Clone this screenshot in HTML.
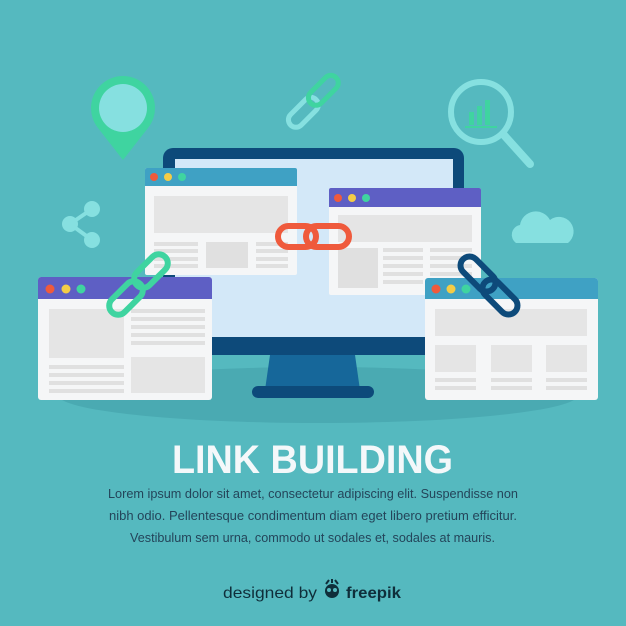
<!DOCTYPE html>
<html><head><meta charset="utf-8"><style>html,body{margin:0;padding:0;background:#55b9bf}svg{display:block}</style></head>
<body>
<svg width="626" height="626" viewBox="0 0 626 626" xmlns="http://www.w3.org/2000/svg" font-family="Liberation Sans, sans-serif">
<rect width="626" height="626" fill="#55b9bf"/>
<ellipse cx="318" cy="395" rx="260" ry="28" fill="#4aaab2"/>
<!-- pin -->
<path d="M123 160 L98 128 A32 32 0 1 1 148 128 Z" fill="#3fd4a0"/>
<circle cx="123" cy="108" r="24" fill="#86e0e0"/>
<!-- top chain -->
<g fill="none" stroke-width="5">
<rect x="285" y="105" width="36" height="15" rx="7.5" transform="rotate(-45 303 112)" stroke="#86e0e0"/>
<rect x="305" y="83" width="36" height="15" rx="7.5" transform="rotate(-45 323 90)" stroke="#3fd4a0"/>
</g>
<!-- magnifier -->
<circle cx="481" cy="112" r="30" fill="none" stroke="#86e0e0" stroke-width="6"/>
<line x1="503" y1="134" x2="530" y2="164" stroke="#86e0e0" stroke-width="8" stroke-linecap="round"/>
<rect x="469" y="112" width="5" height="13" fill="#3fd4a0"/><rect x="477" y="106" width="5" height="19" fill="#3fd4a0"/><rect x="485" y="100" width="5" height="25" fill="#3fd4a0"/>
<rect x="465" y="126" width="32" height="2" fill="#3fd4a0"/>
<!-- cloud -->
<path d="M516 243 A10 10 0 0 1 520 225 A16 16 0 0 1 550 220 A12 12 0 0 1 568 243 Z" fill="#86e0e0"/>
<!-- share -->
<g stroke="#86e0e0" stroke-width="4"><line x1="70" y1="224" x2="92" y2="209"/><line x1="70" y1="224" x2="92" y2="240"/></g>
<circle cx="70" cy="224" r="8" fill="#86e0e0"/><circle cx="92" cy="209" r="8" fill="#86e0e0"/><circle cx="92" cy="240" r="8" fill="#86e0e0"/>
<!-- monitor -->
<rect x="163" y="148" width="301" height="207" rx="10" fill="#0d4a7a"/>
<rect x="175" y="159" width="278" height="178" fill="#d3e8f8"/>
<path d="M270 355 L355 355 L360 390 L265 390 Z" fill="#16679a"/>
<rect x="252" y="386" width="122" height="12" rx="6" fill="#0d4a7a"/>
<!-- window1 -->
<rect x="145" y="168" width="152" height="107" rx="2" fill="#f5f6f7"/>
<path d="M147 168 H295 A2 2 0 0 1 297 170 V186 H145 V170 A2 2 0 0 1 147 168Z" fill="#3fa1c4"/>
<circle cx="154" cy="177" r="4" fill="#ef5a3c"/><circle cx="168" cy="177" r="4" fill="#f4cc46"/><circle cx="182" cy="177" r="4" fill="#3fd4a0"/>
<rect x="154" y="196" width="134" height="37" fill="#e5e5e5"/>
<rect x="206" y="242" width="42" height="26" fill="#e0e0e0"/>
<g fill="#e0e0e0"><rect x="154" y="242" width="44" height="4"/><rect x="154" y="249" width="44" height="4"/><rect x="154" y="257" width="44" height="4"/><rect x="154" y="264" width="44" height="4"/>
<rect x="256" y="242" width="32" height="4"/><rect x="256" y="249" width="32" height="4"/><rect x="256" y="257" width="32" height="4"/><rect x="256" y="264" width="32" height="4"/></g>
<!-- window2 -->
<rect x="329" y="188" width="152" height="107" rx="2" fill="#f5f6f7"/>
<path d="M331 188 H479 A2 2 0 0 1 481 190 V207 H329 V190 A2 2 0 0 1 331 188Z" fill="#5e5fc4"/>
<circle cx="338" cy="198" r="4" fill="#ef5a3c"/><circle cx="352" cy="198" r="4" fill="#f4cc46"/><circle cx="366" cy="198" r="4" fill="#3fd4a0"/>
<rect x="338" y="215" width="134" height="27" fill="#e5e5e5"/>
<rect x="338" y="248" width="40" height="40" fill="#e0e0e0"/>
<g fill="#e0e0e0"><rect x="383" y="248" width="40" height="4"/><rect x="383" y="256" width="40" height="4"/><rect x="383" y="264" width="40" height="4"/><rect x="383" y="272" width="40" height="4"/><rect x="383" y="280" width="40" height="4"/>
<rect x="430" y="248" width="42" height="4"/><rect x="430" y="256" width="42" height="4"/><rect x="430" y="264" width="42" height="4"/><rect x="430" y="272" width="42" height="4"/></g>
<!-- orange chain -->
<g fill="none" stroke="#ef5a3c" stroke-width="6">
<rect x="278" y="226" width="38" height="21" rx="10.5"/>
<rect x="306" y="226" width="43" height="21" rx="10.5"/>
</g>
<!-- window3 -->
<rect x="38" y="277" width="174" height="123" rx="3" fill="#f5f6f7"/>
<path d="M41 277 H209 A3 3 0 0 1 212 280 V299 H38 V280 A3 3 0 0 1 41 277Z" fill="#5e5fc4"/>
<circle cx="50" cy="289" r="4.5" fill="#ef5a3c"/><circle cx="66" cy="289" r="4.5" fill="#f4cc46"/><circle cx="81" cy="289" r="4.5" fill="#3fd4a0"/>
<rect x="49" y="309" width="75" height="49" fill="#e5e5e5"/>
<rect x="131" y="357" width="74" height="36" fill="#e5e5e5"/>
<g fill="#e0e0e0"><rect x="49" y="365" width="75" height="4"/><rect x="49" y="373" width="75" height="4"/><rect x="49" y="381" width="75" height="4"/><rect x="49" y="389" width="75" height="4"/>
<rect x="131" y="309" width="74" height="4"/><rect x="131" y="317" width="74" height="4"/><rect x="131" y="325" width="74" height="4"/><rect x="131" y="333" width="74" height="4"/><rect x="131" y="341" width="74" height="4"/></g>
<!-- green chain -->
<g fill="none" stroke="#3fd4a0" stroke-width="6">
<rect x="106" y="289" width="40" height="18" rx="9" transform="rotate(-45 126 298)"/>
<rect x="131" y="262" width="40" height="18" rx="9" transform="rotate(-45 151 271)"/>
</g>
<!-- window4 -->
<rect x="425" y="278" width="173" height="122" rx="3" fill="#f5f6f7"/>
<path d="M428 278 H595 A3 3 0 0 1 598 281 V299 H425 V281 A3 3 0 0 1 428 278Z" fill="#3fa1c4"/>
<circle cx="436" cy="289" r="4.5" fill="#ef5a3c"/><circle cx="451" cy="289" r="4.5" fill="#f4cc46"/><circle cx="466" cy="289" r="4.5" fill="#3fd4a0"/>
<rect x="435" y="309" width="152" height="27" fill="#e5e5e5"/>
<rect x="435" y="345" width="41" height="27" fill="#e5e5e5"/><rect x="491" y="345" width="41" height="27" fill="#e5e5e5"/><rect x="546" y="345" width="41" height="27" fill="#e5e5e5"/>
<g fill="#e0e0e0"><rect x="435" y="378" width="41" height="4"/><rect x="435" y="386" width="41" height="4"/><rect x="491" y="378" width="41" height="4"/><rect x="491" y="386" width="41" height="4"/><rect x="546" y="378" width="41" height="4"/><rect x="546" y="386" width="41" height="4"/></g>
<!-- dark chain -->
<g fill="none" stroke="#0d4a7a" stroke-width="6">
<rect x="457" y="265" width="42" height="18" rx="9" transform="rotate(45 478 274)"/>
<rect x="479" y="288" width="42" height="18" rx="9" transform="rotate(45 500 297)"/>
</g>
<!-- text -->
<text x="172" y="473" font-size="40" font-weight="bold" fill="#f4f8fa" textLength="281" lengthAdjust="spacingAndGlyphs">LINK BUILDING</text>
<g font-size="12.5" fill="#24455a">
<text x="108" y="498" textLength="410" lengthAdjust="spacingAndGlyphs">Lorem ipsum dolor sit amet, consectetur adipiscing elit. Suspendisse non</text>
<text x="109" y="520" textLength="408" lengthAdjust="spacingAndGlyphs">nibh odio. Pellentesque condimentum diam eget libero pretium efficitur.</text>
<text x="130" y="542" textLength="365" lengthAdjust="spacingAndGlyphs">Vestibulum sem urna, commodo ut sodales et, sodales at mauris.</text>
</g>
<text x="223" y="598" font-size="16" fill="#0f2e3a" textLength="94" lengthAdjust="spacingAndGlyphs">designed by</text>
<circle cx="332" cy="591" r="7" fill="#0f2e3a"/><circle cx="329" cy="590" r="2" fill="#55b9bf"/><circle cx="335" cy="590" r="2" fill="#55b9bf"/>
<path d="M326 584 L329 580 M338 584 L335 580 M332 583 V579" stroke="#0f2e3a" stroke-width="2"/>
<text x="346" y="598" font-size="16" font-weight="bold" fill="#0f2e3a" textLength="55" lengthAdjust="spacingAndGlyphs">freepik</text>
</svg>
</body></html>
